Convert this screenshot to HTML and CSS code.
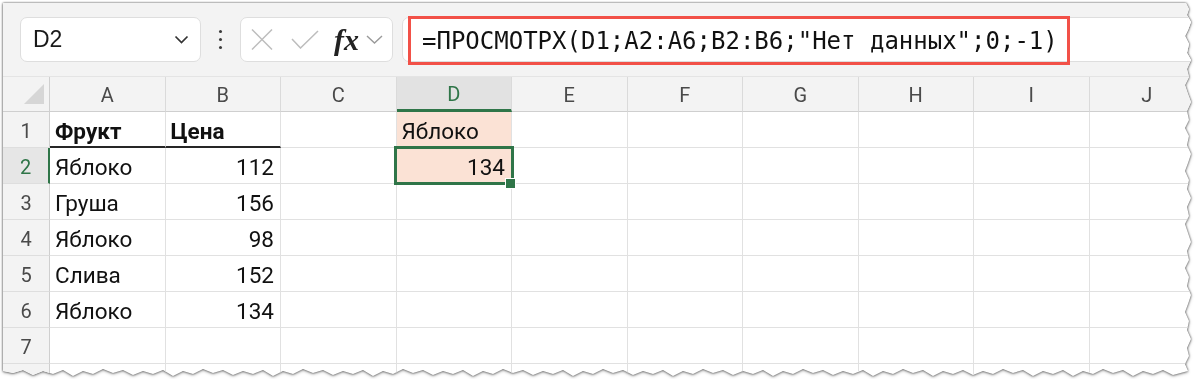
FILE: index.html
```html
<!DOCTYPE html>
<html lang="ru">
<head>
  <meta charset="UTF-8" />
  <title>ПРОСМОТРХ</title>
  <link rel="stylesheet" href="styles.css">
</head>
<body>
  <div class="shot">
    <div class="sheet">
      <div class="toolbar">
        <div class="namebox">
          <span>D2</span>
          <svg class="chevron" width="15" height="9" viewBox="0 0 15 9"><path d="M1.5 1.5 L7.5 7.5 L13.5 1.5" /></svg>
        </div>
        <div class="kebab"><i></i><i></i><i></i></div>
        <div class="funcbox">
          <svg class="icon-x" width="22" height="21" viewBox="0 0 22 21"><path d="M1 0.5 L21 20.5 M21 0.5 L1 20.5" /></svg>
          <svg class="icon-check" width="28" height="19" viewBox="0 0 28 19"><path d="M1 9 L9.5 18 L27 1" /></svg>
          <span class="fx">fx</span>
          <svg class="chevron small" width="17" height="9" viewBox="0 0 17 9"><path d="M1 1 L8.5 8 L16 1" /></svg>
        </div>
        <div class="formula">
          <span class="formula-text">=ПРОСМОТРХ(D1;A2:A6;B2:B6;"Нет данных";0;-1)</span>
        </div>
      </div>

      <div class="grid">
        <div class="corner"></div>
        <div class="ch">A</div><div class="ch">B</div><div class="ch">C</div><div class="ch active">D</div><div class="ch">E</div>
        <div class="ch">F</div><div class="ch">G</div><div class="ch">H</div><div class="ch">I</div><div class="ch">J</div>

        <div class="rh">1</div>
        <div class="c bold under">Фрукт</div><div class="c bold under">Цена</div><div class="c"></div>
        <div class="c hl">Яблоко</div><div class="c"></div><div class="c"></div><div class="c"></div><div class="c"></div><div class="c"></div><div class="c"></div>

        <div class="rh active">2</div>
        <div class="c">Яблоко</div><div class="c num">112</div><div class="c"></div>
        <div class="c hl num sel">134</div><div class="c"></div><div class="c"></div><div class="c"></div><div class="c"></div><div class="c"></div><div class="c"></div>

        <div class="rh">3</div>
        <div class="c">Груша</div><div class="c num">156</div><div class="c"></div>
        <div class="c"></div><div class="c"></div><div class="c"></div><div class="c"></div><div class="c"></div><div class="c"></div><div class="c"></div>

        <div class="rh">4</div>
        <div class="c">Яблоко</div><div class="c num">98</div><div class="c"></div>
        <div class="c"></div><div class="c"></div><div class="c"></div><div class="c"></div><div class="c"></div><div class="c"></div><div class="c"></div>

        <div class="rh">5</div>
        <div class="c">Слива</div><div class="c num">152</div><div class="c"></div>
        <div class="c"></div><div class="c"></div><div class="c"></div><div class="c"></div><div class="c"></div><div class="c"></div><div class="c"></div>

        <div class="rh">6</div>
        <div class="c">Яблоко</div><div class="c num">134</div><div class="c"></div>
        <div class="c"></div><div class="c"></div><div class="c"></div><div class="c"></div><div class="c"></div><div class="c"></div><div class="c"></div>

        <div class="rh">7</div>
        <div class="c"></div><div class="c"></div><div class="c"></div>
        <div class="c"></div><div class="c"></div><div class="c"></div><div class="c"></div><div class="c"></div><div class="c"></div><div class="c"></div>

        <div class="rh"></div>
        <div class="c"></div><div class="c"></div><div class="c"></div>
        <div class="c"></div><div class="c"></div><div class="c"></div><div class="c"></div><div class="c"></div><div class="c"></div><div class="c"></div>
      </div>
    </div>
  </div>
</body>
</html>
```

FILE: styles.css
```css
* {
  margin: 0;
  padding: 0;
  box-sizing: border-box;
}

body {
  background: #fff;
  font-family: Roboto, "Liberation Sans", Arial, sans-serif;
  color: #111;
  overflow: hidden;
}

/* screenshot frame with torn right / bottom edges */
.shot {
  padding: 3px 0 0 3px;
  filter: drop-shadow(0 0 0.8px rgba(0, 0, 0, 0.65)) drop-shadow(0 1px 1.5px rgba(0, 0, 0, 0.3));
}

.sheet {
  width: 1190px;
  height: 376px;
  background: #fff;
  overflow: hidden;
  clip-path: polygon(
    0 0, 1183px 0, 1186px 6px, 1184px 12px, 1188px 19px, 1185px 27px, 1182px 33px, 1186px 41px,
    1184px 50px, 1188px 57px, 1184px 66px, 1186px 74px, 1182px 82px, 1185px 91px, 1188px 99px,
    1184px 108px, 1186px 117px, 1182px 125px, 1186px 133px, 1184px 142px, 1188px 151px, 1185px 160px,
    1182px 168px, 1186px 177px, 1184px 186px, 1188px 195px, 1184px 204px, 1186px 213px, 1182px 221px,
    1185px 230px, 1188px 239px, 1184px 248px, 1186px 257px, 1182px 265px, 1186px 274px, 1184px 283px,
    1188px 292px, 1185px 301px, 1182px 309px, 1186px 318px, 1184px 327px, 1188px 336px, 1184px 345px,
    1186px 353px, 1182px 361px, 1185px 368px,
    1170px 372px, 1160px 367px, 1150px 371px, 1140px 368px, 1130px 373px, 1120px 367px, 1110px 370px,
    1100px 366px, 1090px 371px, 1080px 368px, 1070px 373px, 1060px 367px, 1050px 371px, 1040px 368px,
    1030px 373px, 1020px 367px, 1010px 370px, 1000px 366px, 990px 371px, 980px 368px, 970px 372px,
    960px 367px, 950px 371px, 940px 368px, 930px 373px, 920px 367px, 910px 370px, 900px 366px,
    890px 371px, 880px 368px, 870px 373px, 860px 367px, 850px 371px, 840px 368px, 830px 372px,
    820px 367px, 810px 370px, 800px 366px, 790px 371px, 780px 368px, 770px 373px, 760px 367px,
    750px 371px, 740px 368px, 730px 372px, 720px 367px, 710px 370px, 700px 366px, 690px 371px,
    680px 368px, 670px 373px, 660px 367px, 650px 371px, 640px 368px, 630px 372px, 620px 367px,
    610px 370px, 600px 366px, 590px 371px, 580px 368px, 570px 373px, 560px 367px, 550px 371px,
    540px 368px, 530px 372px, 520px 367px, 510px 370px, 500px 366px, 490px 371px, 480px 368px,
    470px 373px, 460px 367px, 450px 371px, 440px 368px, 430px 372px, 420px 367px, 410px 370px,
    400px 366px, 390px 371px, 380px 368px, 370px 373px, 360px 367px, 350px 371px, 340px 368px,
    330px 372px, 320px 367px, 310px 370px, 300px 366px, 290px 371px, 280px 368px, 270px 373px,
    260px 367px, 250px 371px, 240px 368px, 230px 372px, 220px 367px, 210px 370px, 200px 366px,
    190px 371px, 180px 368px, 170px 373px, 160px 367px, 150px 371px, 140px 368px, 130px 372px,
    120px 367px, 110px 370px, 100px 366px, 90px 371px, 80px 368px, 70px 373px, 60px 367px,
    50px 371px, 40px 368px, 30px 372px, 20px 367px, 10px 370px, 0 368px
  );
}

/* formula bar */
.toolbar {
  height: 74px;
  display: flex;
  align-items: center;
  padding-left: 17px;
  background: #f3f3f3;
  border-bottom: 1px solid #e4e4e4;
}

.namebox,
.funcbox,
.formula {
  height: 45px;
  background: #fff;
  border: 1px solid #dedede;
  border-radius: 7px;
  display: flex;
  align-items: center;
}

.namebox {
  width: 181px;
  padding: 0 11px 0 12px;
  justify-content: space-between;
  font-family: "Liberation Sans", Arial, sans-serif;
  font-size: 23px;
  color: #1a1a1a;
}

.chevron path {
  fill: none;
  stroke: #333;
  stroke-width: 1.7;
}

.chevron.small path {
  stroke: #9a9a9a;
  stroke-width: 1.4;
}

.kebab {
  width: 39px;
  display: flex;
  flex-direction: column;
  align-items: center;
  gap: 4.5px;
}

.kebab i {
  width: 3.5px;
  height: 3.5px;
  border-radius: 50%;
  background: #3a3a3a;
}

.funcbox {
  width: 153px;
  padding-left: 10px;
}

.icon-x path,
.icon-check path {
  fill: none;
  stroke: #bdbdbd;
  stroke-width: 1.5;
}

.icon-check {
  margin-left: 18px;
}

.fx {
  margin-left: 15px;
  font-family: "Liberation Serif", "Times New Roman", serif;
  font-style: italic;
  font-weight: bold;
  font-size: 30px;
  line-height: 1;
  color: #222;
}

.chevron.small {
  margin-left: 7px;
}

.formula {
  flex: 1;
  margin-left: 9px;
  margin-right: -20px;
  border-radius: 7px 0 0 7px;
}

.formula-text {
  margin-left: 5px;
  margin-top: 2px;
  height: 49px;
  display: flex;
  align-items: center;
  padding: 0 9px 0 11px;
  border: 3px solid #f25148;
  font-family: "DejaVu Sans Mono", "Liberation Mono", monospace;
  font-size: 24px;
  color: #111;
  white-space: nowrap;
}

/* sheet grid */
.grid {
  display: grid;
  grid-template-columns: 47px repeat(10, 115.5px);
  grid-template-rows: 35px repeat(7, 36px) 30px;
}

.corner,
.ch,
.rh {
  background: #f3f3f3;
  color: #4a4a4a;
  font-size: 20px;
  display: flex;
  align-items: center;
  justify-content: center;
}

.corner {
  justify-content: flex-end;
  align-items: flex-end;
  padding: 0 5px 7px 0;
  border-right: 1px solid #cfcfcf;
  border-bottom: 1px solid #cfcfcf;
}

.corner::after {
  content: '';
  width: 20px;
  height: 20px;
  background: #d6d6d6;
  clip-path: polygon(100% 0, 100% 100%, 0 100%);
}

.ch {
  border-right: 1px solid #dadada;
  border-bottom: 1px solid #cfcfcf;
  padding-top: 2px;
}

.ch.active {
  background: #e2e2e2;
  color: #2f7548;
  border-bottom: 3px solid #2f7548;
}

.rh {
  border-right: 1px solid #cfcfcf;
  border-bottom: 1px solid #dedede;
  padding-top: 2px;
}

.rh.active {
  background: #e6e6e6;
  color: #2f7548;
  border-right: 2px solid #2f7548;
}

.c {
  border-right: 1px solid #e1e1e1;
  border-bottom: 1px solid #e1e1e1;
  padding: 3px 6px 0 5px;
  font-size: 22.5px;
  display: flex;
  align-items: center;
  white-space: nowrap;
}

.c.bold {
  font-weight: bold;
}

.c.under {
  border-bottom: 2px solid #262626;
}

.c.num {
  justify-content: flex-end;
}

.c.hl {
  background: #fbe2d5;
}

.c.sel {
  position: relative;
  z-index: 2;
}

.c.sel::before {
  content: '';
  position: absolute;
  inset: -2px -3px;
  border: 3px solid #2f7548;
}

.c.sel::after {
  content: '';
  position: absolute;
  right: -4px;
  bottom: -5px;
  width: 9px;
  height: 9px;
  background: #2f7548;
  box-shadow: 0 0 0 1px #fff;
}
```
